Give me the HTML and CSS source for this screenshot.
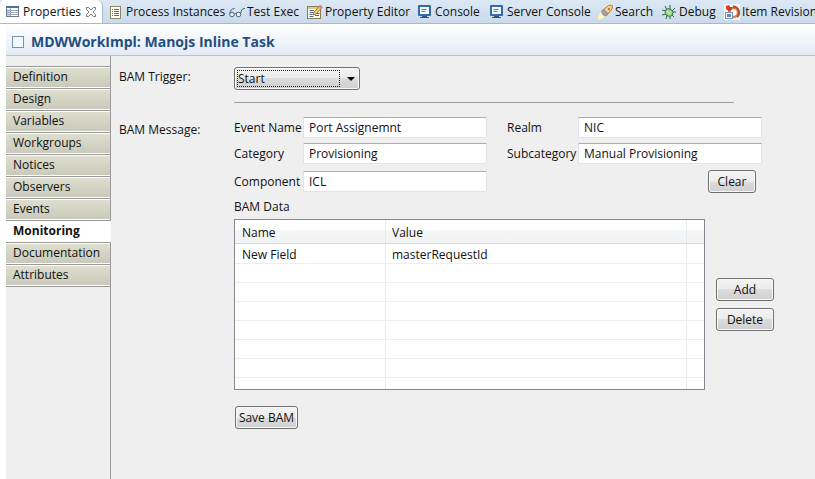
FILE: index.html
```html
<!DOCTYPE html>
<html lang="en">
<head>
<meta charset="utf-8">
<title>Properties</title>
<link rel="stylesheet" href="styles.css">
</head>
<body>
<nav class="tabs" aria-label="Views">
  <a class="tab tab-active" href="#properties">
    <svg class="icon" viewBox="0 0 16 16"><rect x="1.500" y="2.500" width="12" height="10" fill="#fff" stroke="#6b7b93"/><path d="M1 2h13v2H1z" fill="#54709c"/><path d="M2 5h3v7H2z" fill="#c9d9ee"/><path d="M2 6.500h11M2 8.500h11M2 10.500h11M5.500 4v8" stroke="#9aa5b5" fill="none"/></svg>
    Properties
    <svg class="close" viewBox="0 0 12 12"><path d="M1.500 1.500h2L6 4l2.500-2.500h2v2L8 6l2.500 2.500v2h-2L6 8l-2.500 2.500h-2v-2L4 6 1.500 3.500z" fill="#fff" stroke="#777"/></svg>
  </a>
  <a class="tab" href="#instances">
    <svg class="icon" viewBox="0 0 16 16"><rect x="2.500" y="2.500" width="10" height="12" fill="#fffdf3" stroke="#8b8768"/><path d="M4 5.500h1M6 5.500h5M4 7.500h1M6 7.500h5M4 9.500h1M6 9.500h5M4 11.500h1M6 11.500h5" stroke="#4c6a9f"/></svg>
    Process Instances
  </a>
  <a class="tab" href="#exec">
    <svg class="icon" viewBox="0 0 16 16"><g fill="#e4eefa" stroke="#48617e"><circle cx="3" cy="10.500" r="2.300"/><circle cx="9.500" cy="10.500" r="2.300"/><path d="M.8 9.500C1 6.500 3 4.500 5.500 4.500M5.300 10q1-1 2 0M11.800 9.500c.2-3 1-5 4-5" fill="none"/></g></svg>
    Test Exec
  </a>
  <a class="tab" href="#editor">
    <svg class="icon" viewBox="0 0 16 16"><rect x=".5" y="2.500" width="13" height="12" fill="#fffbea" stroke="#8b7b55"/><path d="M1 3h12v2H1z" fill="#d7c99a"/><path d="M2.500 6.500H7M2.500 8.500h4M2.500 10.500h3M2.500 12.500h4M9.500 9.500h3M8 11.500h4" stroke="#49688f"/><path d="M6 11l1-3 6-6.500 2 2L9 10z" fill="#f2c65a" stroke="#a3653c" stroke-width=".8"/><path d="M12 2.500L13.500 1l2 2L14 4.500z" fill="#df7c78"/></svg>
    Property Editor
  </a>
  <a class="tab" href="#console">
    <svg class="icon" viewBox="0 0 16 16"><rect x="1" y="1" width="13" height="11" rx="1" fill="#356aa8"/><path d="M3 3h9v7H3z" fill="#f5faff"/><path d="M4.500 5.500h5M4.500 7.500h4" stroke="#5279a9"/><path d="M5 12h5v1h2v1H3v-1h2z" fill="#27558d"/></svg>
    Console
  </a>
  <a class="tab" href="#server">
    <svg class="icon" viewBox="0 0 16 16"><rect x="1" y="1" width="13" height="11" rx="1" fill="#356aa8"/><path d="M3 3h9v7H3z" fill="#f5faff"/><path d="M4.500 5.500h5M4.500 7.500h4" stroke="#5279a9"/><path d="M5 12h5v1h2v1H3v-1h2z" fill="#27558d"/></svg>
    Server Console
  </a>
  <a class="tab" href="#search">
    <svg class="icon" viewBox="0 0 16 16"><path d="M6 6l5.500-4.500 3-.5 1 1-.5 3L10 11z" fill="#f6d08a" stroke="#b77a35"/><path d="M4.500 7L7 5.500l4 4L9 12q-3 .5-4.500-5z" fill="#a5a0a3" stroke="#817983" stroke-width=".7"/><path d="M4 8q1 4 4 4l-3 3-4 .5.500-4z" fill="#fff5b8"/><circle cx="12" cy="5" r="1" fill="#9c6428"/></svg>
    Search
  </a>
  <a class="tab" href="#debug">
    <svg class="icon" viewBox="0 0 16 16"><path d="M4 2l2 4M9 1v4M1 6l4 1M14 4l-3 3M15 8h-4M1 11l4-1M5 15l1-4M13 13l-3-3M9 15v-3" stroke="#286447" fill="none"/><ellipse cx="8" cy="8.500" rx="4" ry="3.500" transform="rotate(35 8 8.500)" fill="#a6d98b" stroke="#2e7853"/><path d="M6 7l3 3" stroke="#e2f7cb"/></svg>
    Debug
  </a>
  <a class="tab" href="#revision">
    <svg class="icon" viewBox="0 0 16 16"><path d="M0 0h16v16H0z" fill="#f6f4f5"/><circle cx="9.500" cy="8.500" r="4.500" fill="#fff" stroke="#e8833a" stroke-width="2.500"/><path d="M9 2.500a6 6 0 0 1 4 10.500" fill="none" stroke="#a84f39" stroke-width="2"/><path d="M2 5V2l3-1 1 2h3L6 8z" fill="#d33d26"/><rect x="1.500" y="8.500" width="7" height="6" fill="#fff" stroke="#7b91bd"/><path d="M3 10h4v3H3z" fill="#6688c2"/></svg>
    Item Revision
  </a>
</nav>

<div class="view">
  <header class="heading">
    <svg class="heading-icon" viewBox="0 0 12 12"><rect x=".5" y=".5" width="11" height="11" fill="#eefaff" stroke="#7b92ab"/></svg>
    <h1>MDWWorkImpl: Manojs Inline Task</h1>
  </header>
  <div class="body">
    <nav class="sections" aria-label="Sections">
      <a href="#definition">Definition</a>
      <a href="#design">Design</a>
      <a href="#variables">Variables</a>
      <a href="#workgroups">Workgroups</a>
      <a href="#notices">Notices</a>
      <a href="#observers">Observers</a>
      <a href="#events">Events</a>
      <a class="current" href="#monitoring">Monitoring</a>
      <a href="#documentation">Documentation</a>
      <a href="#attributes">Attributes</a>
    </nav>
    <main class="form">
      <label class="trigger-label" for="trigger">BAM Trigger:</label>
      <div class="trigger">
        <span class="combo"><select id="trigger"><option>Start</option></select></span>
        <hr>
      </div>
      <div class="message-label">BAM Message:</div>
      <div class="message">
        <div class="fields">
          <label for="event">Event Name</label><input id="event" value="Port Assignemnt">
          <label class="second" for="realm">Realm</label><input id="realm" value="NIC">
          <label for="category">Category</label><input id="category" value="Provisioning">
          <label class="second" for="subcategory">Subcategory</label><input id="subcategory" value="Manual Provisioning">
          <label for="component">Component</label><input id="component" value="ICL">
          <button class="clear" type="button">Clear</button>
        </div>
        <div class="caption" id="data-caption">BAM Data</div>
        <div class="data">
          <div class="frame">
            <table aria-labelledby="data-caption">
              <colgroup><col class="col-name"><col class="col-value"><col></colgroup>
              <thead><tr><th>Name</th><th>Value</th><th></th></tr></thead>
              <tbody>
                <tr class="filled"><td>New Field</td><td>masterRequestId</td><td></td></tr>
                <tr><td></td><td></td><td></td></tr>
                <tr><td></td><td></td><td></td></tr>
                <tr><td></td><td></td><td></td></tr>
                <tr><td></td><td></td><td></td></tr>
                <tr><td></td><td></td><td></td></tr>
                <tr><td></td><td></td><td></td></tr>
                <tr class="partial"><td></td><td></td><td></td></tr>
              </tbody>
            </table>
          </div>
          <div class="actions">
            <button type="button">Add</button>
            <button type="button">Delete</button>
          </div>
        </div>
        <button class="save" type="button">Save BAM</button>
      </div>
    </main>
  </div>
</div>
</body>
</html>
```
FILE: styles.css
```css
* { box-sizing: border-box; }

body {
  margin: 0;
  min-height: 100vh;
  display: flex;
  flex-direction: column;
  background: #fff;
  color: #111;
  font: 12px/16px "Open Sans", "Noto Sans", sans-serif;
  overflow: hidden;
}

a { color: inherit; text-decoration: none; }
input, select, button { font: inherit; color: inherit; }

.tabs {
  display: grid;
  grid-template-columns: 103px 121px 78px 110px 72px 108px 64px 63px 1fr;
  height: 24px;
  background: linear-gradient(#dce8f4, #cbdaea);
  border-bottom: 1px solid #a9b9cd;
  overflow: hidden;
}

.tab {
  display: flex;
  align-items: center;
  gap: 2px;
  padding-left: 5px;
  white-space: nowrap;
}

.tab-active {
  height: 24px;
  background: #fff;
  border-right: 1px solid #a9b9cd;
  border-radius: 5px 6px 0 0;
}

.icon { flex: none; width: 16px; height: 16px; }
.close { flex: none; width: 12px; height: 12px; margin-left: 2px; }

.view {
  flex: 1;
  display: flex;
  flex-direction: column;
  margin-left: 6px;
}

.heading {
  display: flex;
  align-items: center;
  gap: 7px;
  height: 32px;
  padding: 4px 6px 0;
  background: linear-gradient(#fff, #e4ebf5);
  border-bottom: 1px solid #b5c3d5;
}

.heading-icon { width: 12px; height: 12px; }
h1 { margin: 0; color: #1f4e7f; font-size: 14px; line-height: 20px; }

.body { flex: 1; display: flex; background: #efefef; }

.sections {
  width: 105px;
  padding-top: 10px;
  background: linear-gradient(#9a9a9a, #9a9a9a) right / 1px 100% no-repeat;
}

.sections a {
  display: block;
  height: 22px;
  margin-right: 1px;
  padding: 1px 7px;
  line-height: 18px;
  background: linear-gradient(#dedfce, #c8c9ba);
  border-top: 1px solid #999;
  box-shadow: inset 0 1px #fff, inset 0 -1px #fff;
}

.sections a:last-child { height: 23px; border-bottom: 1px solid #999; }
.sections .current { margin-right: 0; background: #fff; font-weight: bold; }

.form {
  flex: 1;
  display: grid;
  grid-template-columns: 115px 1fr;
  align-content: start;
  row-gap: 14px;
  padding: 11px 8px;
}

.trigger-label { padding-top: 2px; }
.message-label { padding-top: 5px; }

.combo { display: block; position: relative; width: 126px; height: 23px; }

.combo::before {
  content: "";
  position: absolute;
  inset: 3px 20px 3px 3px;
  border: 1px dotted #222;
  pointer-events: none;
}

.combo::after {
  content: "";
  position: absolute;
  top: 10px;
  right: 5px;
  border: 4px solid transparent;
  border-top-color: #000;
  border-bottom: 0;
  pointer-events: none;
}

select, button {
  height: 23px;
  background: linear-gradient(#f3f3f3, #ebebeb 50%, #dcdcdc 50%, #cfcfcf);
  border: 1px solid #707070;
  border-radius: 3px;
  box-shadow: inset 0 0 0 1px #fafafa;
}

select { width: 100%; padding: 0 3px; appearance: none; }
button { padding: 0; line-height: 18px; }

hr {
  width: 500px;
  max-width: 100%;
  margin: 12px 0 0;
  border: 0;
  border-top: 1px solid #a0a0a0;
}

.fields {
  display: grid;
  grid-template-columns: 69px 184px 91px 184px;
  grid-template-rows: 21px 21px 25px;
  row-gap: 5px;
  align-items: center;
}

.second { padding-left: 20px; }

input {
  width: 100%;
  height: 21px;
  padding: 0 5px;
  background: #fff;
  border: 1px solid #e2e3ea;
  border-top-color: #abadb3;
  border-radius: 1px;
}

.clear { grid-column: 4; justify-self: end; width: 48px; margin-right: 6px; }
.caption { line-height: 25px; }

.data { display: flex; align-items: center; gap: 11px; }
.frame { width: 471px; background: #fff; border: 1px solid #828790; }

table { width: 100%; table-layout: fixed; border-collapse: separate; border-spacing: 0; }
.col-name { width: 151px; }
.col-value { width: 301px; }

th, td {
  height: 19px;
  padding: 0 7px;
  border-right: 1px solid #e6eaee;
  border-bottom: 1px solid #eceff2;
  text-align: left;
  font-weight: normal;
}

th {
  height: 24px;
  padding-top: 2px;
  background: linear-gradient(#fff 45%, #f5f6f8 45%, #f1f3f5);
  border-bottom-color: #d5d5d5;
}

td + td, th + th { padding-left: 6px; }
th:last-child, td:last-child { border-right: 0; }
.filled td { height: 20px; padding-top: 2px; }
.partial td { height: 11px; border-bottom: 0; }

.actions { display: grid; gap: 7px; }
.actions button { width: 58px; }
.save { width: 63px; margin: 16px 1px; }
```
